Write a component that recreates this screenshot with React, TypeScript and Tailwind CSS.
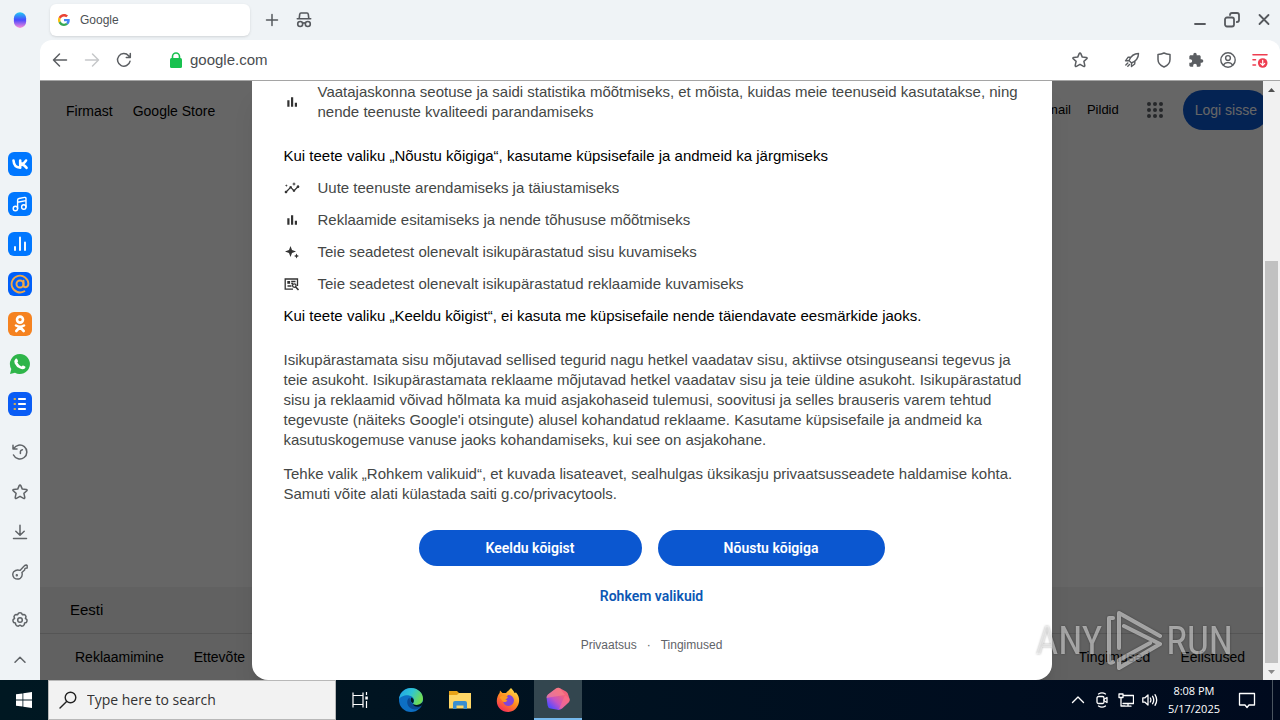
import type { ReactNode } from "react";
import { MdExtension, MdInsights } from "react-icons/md";

type IconProps = { className?: string };

function Line({ className, children, width = 1.5, box = 24 }: IconProps & { children: ReactNode; width?: number; box?: number }) {
  return (
    <svg
      viewBox={`0 0 ${box} ${box}`}
      className={className}
      fill="none"
      stroke="currentColor"
      strokeWidth={width}
      strokeLinecap="round"
      strokeLinejoin="round"
      aria-hidden="true"
    >
      {children}
    </svg>
  );
}

const StarIcon = ({ className }: IconProps) => (
  <Line className={className} box={16}>
    <path d="M8 .9 Q8.500 .9 8.800 1.600 L10.300 5.100 L14.300 5.500 Q15.600 5.800 14.800 6.800 L11.900 9.400 L12.800 13.400 Q12.900 14.900 11.600 14.400 L8 12.300 L4.400 14.400 Q3.100 14.900 3.200 13.400 L4.100 9.400 L1.200 6.800 Q.4 5.800 1.700 5.500 L5.700 5.100 L7.200 1.600 Q7.500 .9 8 .9Z" />
  </Line>
);

const GoogleIcon = () => (
  <svg viewBox="0 0 48 48" className="size-3 shrink-0" aria-hidden="true">
    <path fill="#EA4335" d="M24 9.500c3.500 0 6.700 1.200 9.200 3.600l6.900-6.900C35.900 2.400 30.500 0 24 0 14.600 0 6.500 5.400 2.600 13.200l8 6.200C12.400 13.700 17.700 9.500 24 9.500z" />
    <path fill="#4285F4" d="M47 24.500c0-1.600-.2-3.100-.4-4.500H24v9h12.900c-.6 3-2.300 5.500-4.800 7.200l7.700 6C44.400 38 47 31.800 47 24.500z" />
    <path fill="#FBBC05" d="M10.500 28.600c-.5-1.500-.8-3-.8-4.600s.3-3.100.8-4.600l-8-6.200C.9 16.500 0 20.100 0 24s.9 7.500 2.600 10.800z" />
    <path fill="#34A853" d="M24 48c6.500 0 11.900-2.100 15.900-5.800l-7.700-6c-2.200 1.500-4.900 2.300-8.200 2.300-6.300 0-11.600-4.200-13.500-9.900l-8 6.200C6.500 42.600 14.600 48 24 48z" />
  </svg>
);

const BarsIcon = () => (
  <svg viewBox="0 0 16 16" className="size-4" fill="currentColor" aria-hidden="true">
    <path d="M3.300 6.300 H5.500 V12.800 H3.300Z M7 3.300 H9.200 V12.800 H7Z M10.800 8.700 H13 V12.800 H10.800Z" />
  </svg>
);

const SparkIcon = () => (
  <svg viewBox="0 0 16 16" className="size-4" fill="currentColor" aria-hidden="true">
    <path d="M6.500 2 L8 6.100 L12 7.500 L8 9 L6.500 13 L5 9 L1 7.500 L5 6.100Z M12.500 9.500 L13.300 11.200 L15 12 L13.300 12.800 L12.500 14.500 L11.700 12.800 L10 12 L11.700 11.200Z" />
  </svg>
);

const AdIcon = () => (
  <svg viewBox="0 0 16 16" className="size-4" fill="none" stroke="currentColor" strokeWidth="1.300" aria-hidden="true">
    <path d="M9 13.200 H1.200 V3 H13.500 V10" />
    <rect x="3.300" y="5" width="2.800" height="2.800" fill="currentColor" stroke="none" />
    <path d="M7.200 5.500 H11.500 M7.200 7.500 H9 M3.500 10 H7.500" />
    <circle cx="10.300" cy="9.600" r="1.800" />
    <path d="M11.500 10.800 L14.500 14" strokeWidth="1.600" />
  </svg>
);

function Sidebar() {
  const apps: { label: string; tile: string; icon: ReactNode }[] = [
    {
      label: "VK",
      tile: "bg-[#0077ff]",
      icon: (
        <Line className="size-4" width={2.6} box={16}>
          <path d="M1.500 4.500 Q2 11.500 8.200 11.800 V4.500 M14 4.500 Q12.500 7.500 8.800 8.200 Q12.500 8.600 14.500 11.800" />
        </Line>
      ),
    },
    {
      label: "Music",
      tile: "bg-[#0077ff]",
      icon: (
        <Line className="size-4" width={1.4} box={16}>
          <circle cx="3.400" cy="12.500" r="2.200" />
          <circle cx="11.800" cy="11" r="2.200" />
          <path d="M5.600 12.500 V4 Q5.600 2.800 7 2.500 L12.600 1.400 Q14 1.200 14 2.600 V11 M5.600 6.200 L14 4.600" />
        </Line>
      ),
    },
    {
      label: "Stats",
      tile: "bg-[#0077ff]",
      icon: (
        <Line className="size-4" width={1.9} box={16}>
          <path d="M3 11 V14 M8 1.500 V14 M13 6.500 V14" />
        </Line>
      ),
    },
    {
      label: "Mail",
      tile: "bg-[#005ff9]",
      icon: (
        <Line className="size-5 text-[#f0a848]" width={1.9} box={20}>
          <circle cx="10" cy="10" r="3.500" />
          <path d="M13.500 6.800 V11 Q13.500 13.300 15.500 13.300 Q18.500 13 18.400 9.600 A8.400 8.400 0 1 0 14.300 17.300" />
        </Line>
      ),
    },
    {
      label: "OK",
      tile: "bg-[#f58220]",
      icon: (
        <Line className="size-5" width={2.6} box={20}>
          <circle cx="10" cy="5.600" r="3" />
          <path d="M6 11.500 Q10 13.900 14 11.500 M10 13 L6.300 17 M10 13 L13.700 17" />
        </Line>
      ),
    },
    {
      label: "WhatsApp",
      tile: "",
      icon: (
        <svg viewBox="0 0 24 24" className="size-6" aria-hidden="true">
          <path d="M12 2 A10 10 0 1 1 7 20.700 L2 22 L3.300 17 A10 10 0 0 1 12 2Z" fill="#2fb54a" />
          <path d="M7.600 6.700 Q8.700 6 9.300 7.200 L10 9 Q10.200 9.600 9.300 10.600 Q10.800 13.400 13.500 14.500 Q14.600 13.200 15.200 13.500 L17.200 14.500 Q18 15.200 16.800 16.500 Q15 18 12 16.600 Q8.300 14.900 6.700 11.400 Q5.700 8.400 7.600 6.700Z" fill="#fff" />
        </svg>
      ),
    },
    {
      label: "Lists",
      tile: "bg-[#0a5cf5]",
      icon: (
        <Line className="size-4" width={2.2} box={16}>
          <path d="M7 3 H13 M7 8 H13 M7 13 H13" />
          <path d="M2.600 3 H3 M2.600 8 H3 M2.600 13 H3" stroke="#d9b04a" />
        </Line>
      ),
    },
  ];

  const tools: { label: string; icon: ReactNode }[] = [
    {
      label: "History",
      icon: (
        <Line className="size-4" box={16}>
          <path d="M1.600 4.800 A7 7 0 1 1 1.500 11 M1 1.200 V5 H5 M8.400 9.400 V7.500 Q8.400 6.400 10.400 5.700" />
        </Line>
      ),
    },
    { label: "Bookmarks", icon: <StarIcon className="size-4" /> },
    {
      label: "Downloads",
      icon: (
        <Line className="size-4" box={16}>
          <path d="M8 1.200 V11 M3.800 7.200 L8 11.200 L12.200 7.200 M1.500 14.600 H14.500" />
        </Line>
      ),
    },
    {
      label: "Passwords",
      icon: (
        <Line className="size-4" width={1.4} box={16}>
          <path d="M8 6.400 L12.400 1.700 Q13 1 14.600 1 L15.200 1.500 V4 L13 4.400 L12.600 6 L9.900 8.500 Q11 12 8.300 14.300 Q5.200 16 2.200 14 Q-.4 11 1.700 7.700 Q4.500 5 8 6.400Z" />
          <circle cx="4.800" cy="11.300" r=".5" fill="currentColor" />
        </Line>
      ),
    },
  ];

  return (
    <aside className="flex w-10 shrink-0 flex-col items-center bg-[#eff3f6] text-[#606468]">
      <div className="flex h-10 items-center">
        <svg viewBox="0 0 16 18" className="h-4 w-3.5" aria-hidden="true">
          <defs>
            <linearGradient id="orb" x1="0" y1="0" x2="0" y2="1">
              <stop offset="0" stopColor="#20cdf2" />
              <stop offset=".5" stopColor="#4a48ff" />
              <stop offset="1" stopColor="#fb8bd8" />
            </linearGradient>
          </defs>
          <rect x="1" y="0" width="14" height="18" rx="7" fill="url(#orb)" />
        </svg>
      </div>
      <nav aria-label="Apps" className="mt-auto flex flex-col gap-4">
        {apps.map((app) => (
          <button key={app.label} type="button" aria-label={app.label} className={`flex size-6 items-center justify-center rounded-[6px] text-white ${app.tile}`}>
            {app.icon}
          </button>
        ))}
      </nav>
      <nav aria-label="Tools" className="mt-7 flex flex-col gap-6 pb-3">
        {tools.map((tool) => (
          <button key={tool.label} type="button" aria-label={tool.label} className="size-4">
            {tool.icon}
          </button>
        ))}
        <button type="button" aria-label="Settings" className="mt-2 size-4">
          <Line className="size-4" box={16}>
            <circle cx="8" cy="8" r="2.300" />
            <path d="M6.500 1.200 Q8 .4 9.500 1.200 L10.300 2.700 L12.100 2.500 Q13.700 3 14 4.700 L13.400 6.400 L14.900 7.600 Q15.300 9 14.300 10.500 L12.600 10.900 L12.300 12.700 Q11.300 14.200 9.700 14.200 L8 13.200 L6.300 14.200 Q4.700 14.200 3.700 12.700 L3.400 10.900 L1.700 10.500 Q.7 9 1.100 7.600 L2.600 6.400 L2 4.700 Q2.300 3 3.900 2.500 L5.700 2.700Z" />
          </Line>
        </button>
        <button type="button" aria-label="Collapse" className="size-4">
          <Line className="size-4" box={16}>
            <path d="M3 10.300 L8 5.300 L13 10.300" />
          </Line>
        </button>
      </nav>
    </aside>
  );
}

function TabBar() {
  return (
    <div className="flex h-10 items-center bg-[#eff3f6] pr-2 pl-2.5 text-[#56595e]">
      <div className="flex h-8 w-50 items-center gap-2.5 rounded-md bg-white px-2 text-xs text-[#4c5054] shadow-sm">
        <GoogleIcon />
        <span>Google</span>
      </div>
      <button type="button" aria-label="New tab" className="ml-3.5">
        <Line className="size-4" box={16}>
          <path d="M8 2.500 V13.500 M2.500 8 H13.500" />
        </Line>
      </button>
      <button type="button" aria-label="Private window" className="ml-4">
        <Line className="size-4" width={1.6} box={16}>
          <path d="M3.200 6.500 L3.700 2.300 Q3.900 1 5 1 H11 Q12.100 1 12.300 2.300 L12.800 6.500 M1.300 6.800 H14.700 M6.700 11.300 Q8 10.200 9.300 11.300" />
          <circle cx="4.200" cy="12" r="2.500" />
          <circle cx="11.800" cy="12" r="2.500" />
        </Line>
      </button>
      <div className="ml-auto flex items-center gap-4">
        <button type="button" aria-label="Minimize">
          <Line className="size-4" width={1.8} box={16}>
            <path d="M3 12 H13" />
          </Line>
        </button>
        <button type="button" aria-label="Restore">
          <Line className="size-4" width={1.8} box={16}>
            <rect x="1" y="5.500" width="9" height="9" rx="2" />
            <path d="M6 3 Q6 1 8 1 H13 Q15 1 15 3 V8 Q15 10 12.800 10" />
          </Line>
        </button>
        <button type="button" aria-label="Close">
          <Line className="size-4" width={1.8} box={16}>
            <path d="M3.500 3 L12.500 12 M12.500 3 L3.500 12" />
          </Line>
        </button>
      </div>
    </div>
  );
}

function Toolbar() {
  return (
    <div className="bg-[#eff3f6]">
      <div className="flex h-[41px] items-center gap-4 rounded-t-xl border-b border-[#a5a5a5] bg-white px-3 text-[#5b5e62]">
        <button type="button" aria-label="Back">
          <Line className="size-4" box={16}>
            <path d="M14.500 8 H1.500 M7.500 2 L1.500 8 L7.500 14" />
          </Line>
        </button>
        <button type="button" aria-label="Forward" className="text-[#c6c8ca]">
          <Line className="size-4" box={16}>
            <path d="M1.500 8 H14.500 M8.500 2 L14.500 8 L8.500 14" />
          </Line>
        </button>
        <button type="button" aria-label="Reload">
          <Line className="size-4" box={16}>
            <path d="M14 9.300 A6.300 6.300 0 1 1 12.600 3.700 L14 5.300 M14.300 1.500 V5.500 H10.300" />
          </Line>
        </button>
        <div className="ml-[22px] flex items-center gap-2">
          <svg viewBox="0 0 12 16" className="h-4 w-3" aria-hidden="true">
            <path d="M2.500 7 V4.500 A3.500 3.500 0 0 1 9.500 4.500 V7" fill="none" stroke="#18c14f" strokeWidth="1.600" />
            <rect x="0" y="6" width="12" height="10" rx="1.500" fill="#18c14f" />
          </svg>
          <span className="text-[15px] text-[#4a4d50]">google.com</span>
        </div>
        <button type="button" aria-label="Bookmark" className="mr-5 ml-auto">
          <StarIcon className="size-4" />
        </button>
        <button type="button" aria-label="Turbo">
          <Line className="size-4" width={1.4} box={16}>
            <path d="M14.500 1.500 Q8 1.500 5 8.500 L7.500 11 Q14.500 8 14.500 1.500Z M7 5 L4 5.300 L1.500 8.800 L5 8.600 M11 9 L10.700 12 L7.500 14.500 V11 M3.800 11 L1.800 13 M5.500 12.500 L3.800 14.200" />
          </Line>
        </button>
        <button type="button" aria-label="Protection">
          <Line className="size-4" box={16}>
            <path d="M8 1 Q10.500 2.300 14 2.500 V7.500 Q14 12.500 8 15 Q2 12.500 2 7.500 V2.500 Q5.500 2.300 8 1Z" />
          </Line>
        </button>
        <button type="button" aria-label="Extensions">
          <MdExtension className="size-4" />
        </button>
        <button type="button" aria-label="Profile">
          <Line className="size-4" width={1.4} box={16}>
            <circle cx="8" cy="8" r="7.200" />
            <circle cx="8" cy="6" r="2.400" />
            <path d="M3.300 13 Q5 10.500 8 10.500 Q11 10.500 12.700 13" />
          </Line>
        </button>
        <button type="button" aria-label="Menu" className="text-[#ee3d50]">
          <Line className="size-4" width={1.6} box={16}>
            <path d="M1 2.700 H15 M1 7.800 H3.500 M1 13 H3.500" />
            <circle cx="10.700" cy="11" r="4.800" fill="currentColor" stroke="none" />
            <path d="M10.700 8.300 V13.200 M8.700 11.300 L10.700 13.300 L12.700 11.300" stroke="#fff" strokeWidth="1.200" />
          </Line>
        </button>
      </div>
    </div>
  );
}

function GooglePage() {
  return (
    <div className="flex h-full flex-col overflow-hidden bg-white text-sm text-black">
      <header className="flex items-center justify-between pt-[9px] pl-[26px]">
        <nav className="flex gap-5 pt-px">
          <a href="#about">Firmast</a>
          <a href="#store">Google Store</a>
        </nav>
        <div className="-mr-1.5 flex items-center gap-4">
          <a href="#gmail" className="text-[13px]">Gmail</a>
          <a href="#images" className="text-[13px]">Pildid</a>
          <button type="button" aria-label="Apps" className="ml-2 flex size-6 items-center justify-center text-[#5f6368]">
            <svg viewBox="0 0 16 16" className="size-4" fill="currentColor" aria-hidden="true">
              {[2, 8, 14].map((y) => [2, 8, 14].map((x) => <circle key={`${x}-${y}`} cx={x} cy={y} r="2" />))}
            </svg>
          </button>
          <button type="button" className="h-10 rounded-full bg-[#0b57d0] px-3 whitespace-nowrap text-white">
            Logi sisse
          </button>
        </div>
      </header>
      <footer className="mt-auto bg-[#f2f2f2]">
        <div className="border-b border-[#d5d5d5] px-[30px] py-3 text-[15px]/[22px]">Eesti</div>
        <div className="flex h-[46px] items-center justify-between pr-[18px] pl-[35px]">
          <nav className="flex gap-[30px]">
            <a href="#ads">Reklaamimine</a>
            <a href="#business">Ettevõte</a>
          </nav>
          <nav className="flex gap-[30px]">
            <a href="#terms">Tingimused</a>
            <a href="#settings">Eelistused</a>
          </nav>
        </div>
      </footer>
    </div>
  );
}

function Purpose({ icon, children }: { icon: ReactNode; children: ReactNode }) {
  return (
    <li className="flex items-center gap-[18px]">
      <span className="size-4 shrink-0 text-[#333]">{icon}</span>
      <span>{children}</span>
    </li>
  );
}

function ConsentDialog() {
  return (
    <div
      role="dialog"
      aria-label="Küpsisefailid"
      className="flex h-full w-[800px] max-w-full flex-col overflow-hidden rounded-b-2xl bg-white px-8 pt-px text-[15px]/[20px] text-[#444746] shadow-xl"
    >
      <ul>
        <Purpose icon={<BarsIcon />}>
          Vaatajaskonna seotuse ja saidi statistika mõõtmiseks, et mõista, kuidas meie teenuseid kasutatakse, ning
          <br />
          nende teenuste kvaliteedi parandamiseks
        </Purpose>
      </ul>
      <p className="mt-6 text-black">Kui teete valiku „Nõustu kõigiga“, kasutame küpsisefaile ja andmeid ka järgmiseks</p>
      <ul className="my-3 flex flex-col gap-3">
        <Purpose icon={<MdInsights className="size-4" />}>Uute teenuste arendamiseks ja täiustamiseks</Purpose>
        <Purpose icon={<BarsIcon />}>Reklaamide esitamiseks ja nende tõhususe mõõtmiseks</Purpose>
        <Purpose icon={<SparkIcon />}>Teie seadetest olenevalt isikupärastatud sisu kuvamiseks</Purpose>
        <Purpose icon={<AdIcon />}>Teie seadetest olenevalt isikupärastatud reklaamide kuvamiseks</Purpose>
      </ul>
      <p className="text-black">Kui teete valiku „Keeldu kõigist“, ei kasuta me küpsisefaile nende täiendavate eesmärkide jaoks.</p>
      <p className="mt-6 whitespace-nowrap">
        Isikupärastamata sisu mõjutavad sellised tegurid nagu hetkel vaadatav sisu, aktiivse otsinguseansi tegevus ja
        <br />
        teie asukoht. Isikupärastamata reklaame mõjutavad hetkel vaadatav sisu ja teie üldine asukoht. Isikupärastatud
        <br />
        sisu ja reklaamid võivad hõlmata ka muid asjakohaseid tulemusi, soovitusi ja selles brauseris varem tehtud
        <br />
        tegevuste (näiteks Google'i otsingute) alusel kohandatud reklaame. Kasutame küpsisefaile ja andmeid ka
        <br />
        kasutuskogemuse vanuse jaoks kohandamiseks, kui see on asjakohane.
      </p>
      <p className="mt-3.5">
        Tehke valik „Rohkem valikuid“, et kuvada lisateavet, sealhulgas üksikasju privaatsusseadete haldamise kohta.
        <br />
        Samuti võite alati külastada saiti g.co/privacytools.
      </p>
      <div className="mt-[26px] flex justify-center gap-4 text-sm font-semibold text-white [font-family:Roboto,'Liberation_Sans',sans-serif]">
        <button type="button" className="h-9 w-[223px] rounded-full bg-[#0b57d0]">Keeldu kõigist</button>
        <button type="button" className="h-9 w-[227px] rounded-full bg-[#0b57d0]">Nõustu kõigiga</button>
      </div>
      <a href="#more" className="mt-5 self-center text-sm/[20px] font-semibold text-[#0b57b4] [font-family:Roboto,'Liberation_Sans',sans-serif]">
        Rohkem valikuid
      </a>
      <div className="mt-[30px] flex justify-center gap-2.5 text-[12px]/[18px] text-[#5f6368]">
        <a href="#privacy">Privaatsus</a>
        <span>·</span>
        <a href="#tos">Tingimused</a>
      </div>
    </div>
  );
}

function Scrollbar() {
  return (
    <div className="flex w-[17px] shrink-0 flex-col items-center bg-[#f1f1f1]" aria-hidden="true">
      <svg viewBox="0 0 17 17" className="size-[17px]"><path d="M5 11 L8.500 7 L12 11Z" fill="#505050" /></svg>
      <div className="grow-[163]" />
      <div className="w-[13px] grow-[402] bg-[#c1c1c1]" />
      <svg viewBox="0 0 17 17" className="size-[17px]"><path d="M5 7 L8.500 11 L12 7Z" fill="#8a8a8a" /></svg>
    </div>
  );
}

function Watermark() {
  return (
    <div className="pointer-events-none absolute right-[47px] bottom-2 flex items-center gap-1 text-[39px] leading-none text-white/50 drop-shadow-[0_0_1px_rgba(0,0,0,0.6)] [font-family:'Roboto_Condensed','Open_Sans_Condensed','Liberation_Sans_Narrow','Liberation_Sans',sans-serif]">
      <span>ANY</span>
      <svg viewBox="0 0 56 62" className="h-[62px] w-14" fill="none" stroke="currentColor" strokeWidth="4" strokeLinejoin="round" strokeLinecap="round" aria-hidden="true">
        <path d="M7 8 H3 V50 Q3 54 7 52 M13 38 V3 L54 26 M18 16 L54 34 L13 58 V50 L44 33" />
      </svg>
      <span>RUN</span>
    </div>
  );
}

function Taskbar() {
  return (
    <footer className="flex h-10 shrink-0 items-stretch bg-linear-to-r from-[#001822] to-[#000a1e] text-white [font-family:'Open_Sans','Noto_Sans',sans-serif]">
      <button type="button" aria-label="Start" className="flex w-12 items-center justify-center">
        <svg viewBox="0 0 16 16" className="size-4" fill="#fff" aria-hidden="true">
          <path d="M0 2.300 L6.500 1.400 V7.600 H0Z M7.300 1.300 L16 0 V7.600 H7.300Z M0 8.400 H6.500 V14.600 L0 13.700Z M7.300 8.400 H16 V16 L7.300 14.700Z" />
        </svg>
      </button>
      <label className="flex w-72 items-center gap-2.5 border border-[#b8b8b8] bg-[#f2f2f2] px-2.5 text-[#222]">
        <Line className="size-[18px] shrink-0" width={1.4} box={18}>
          <circle cx="11.500" cy="6.500" r="5.300" />
          <path d="M7.600 10.400 L1 17" />
        </Line>
        <input type="text" aria-label="Search" placeholder="Type here to search" className="min-w-0 flex-1 bg-transparent text-sm outline-none placeholder:text-[#333]" />
      </label>
      <button type="button" aria-label="Task view" className="flex w-12 items-center justify-center">
        <svg viewBox="0 0 16 16" className="size-4" fill="none" stroke="#fff" strokeWidth="1.200" aria-hidden="true">
          <path d="M1 .5 V3.500 H11 V.5 M1 15.500 V12.500 H11 V15.500 M1 3.500 V12.500 M11 3.500 V12.500 M14.500 0 V3 M14.500 9 V16" />
          <rect x="13.300" y="4.500" width="2.500" height="3" fill="#fff" stroke="none" />
        </svg>
      </button>
      <button type="button" aria-label="Edge" className="flex w-[54px] items-center justify-center">
        <svg viewBox="0 0 24 24" className="size-6" aria-hidden="true">
          <defs>
            <linearGradient id="edgeTop" x1="0" y1="0" x2="1" y2=".4">
              <stop offset="0" stopColor="#1f9fe8" />
              <stop offset=".55" stopColor="#2fc5d4" />
              <stop offset="1" stopColor="#6fdc55" />
            </linearGradient>
          </defs>
          <circle cx="12" cy="12" r="12" fill="#0d6fc4" />
          <path d="M0 11.500 C.5 4.500 6 0 12 0 C19 0 24 5 24 10.700 C24 15 20.500 17 17.500 17 C15 17 13.500 16 14.200 14.900 C16 12.800 15 8 10 7.400 C5 7 1 9 0 11.500Z" fill="url(#edgeTop)" />
          <path d="M10.500 9.500 C6.500 12 7.500 20.500 15.500 21.500 C19 21.500 21.500 20 23 17.300 C19.500 19.500 11.500 18.500 10.500 9.500Z" fill="#0b4a94" />
          <path d="M13.900 15.300 C12 14.500 11 12 12.300 9.600 C15 10.500 15.500 13.300 13.900 15.300Z M14 15.500 C14.500 17.500 21 18 24 13.500 L23.500 17 C20 20 14 19 14 15.500Z" fill="#001822" />
        </svg>
      </button>
      <button type="button" aria-label="File Explorer" className="flex w-11 items-center justify-center">
        <svg viewBox="0 0 22 18" className="h-[18px] w-[22px]" aria-hidden="true">
          <path d="M0 0 H8 L10 2 H22 V17 H0Z" fill="#e8a317" />
          <path d="M0 4 H8 L10 2 H22 V17.500 H0Z" fill="#ffd766" />
          <path d="M4 18 V12 Q4 10 6 10 H16 Q18 10 18 12 V18 H14.500 V14.500 H7.500 V18Z" fill="#3a8fd0" />
        </svg>
      </button>
      <button type="button" aria-label="Firefox" className="flex w-[52px] items-center justify-center">
        <svg viewBox="0 0 24 24" className="size-6" aria-hidden="true">
          <defs>
            <linearGradient id="fox" x1=".8" y1="0" x2=".2" y2="1">
              <stop offset="0" stopColor="#ffe14a" />
              <stop offset=".5" stopColor="#ff8a1f" />
              <stop offset="1" stopColor="#f5245e" />
            </linearGradient>
          </defs>
          <path d="M15 0 C17 2 18 3.500 18.500 5 L20 4.500 C22.500 7 23.500 10 23 14 C22 20 17.500 24 12 24 C6 24 1 19.500 .8 13.500 C.7 10 2 7 3.600 5 L4 2.500 L6.500 5 L10 5 C11.500 3 13.500 2 15 0Z" fill="url(#fox)" />
          <path d="M12 7 A5.500 5.500 0 1 1 7 13 C8.500 14 10 13.500 11.500 12 C9 12 8 10.500 8.500 9.500 C9.500 9.500 11 9 12 7Z" fill="#8245d8" />
          <path d="M3.600 9.500 C5 7.500 8 7.500 9.500 8.500 L12 9 C11.500 10.500 9.500 11 9.300 12 L11.500 12.800 C9 15 7 14 6.500 13Z" fill="#ff9b22" />
        </svg>
      </button>
      <button type="button" aria-label="Browser" className="flex w-12 items-center justify-center border-b-2 border-[#76b9ed] bg-[#33464f]">
        <svg viewBox="0 0 24 24" className="size-6" aria-hidden="true">
          <defs>
            <linearGradient id="gem" x1="1" y1="0" x2="0" y2="1">
              <stop offset=".3" stopColor="#f2627c" />
              <stop offset=".6" stopColor="#c452c4" />
              <stop offset=".85" stopColor="#5a4bff" />
            </linearGradient>
          </defs>
          <path d="M10 1.500 Q12 .3 14 1.300 L20 4.500 Q22 5.500 22.300 8 L23.600 12 Q24 14 22.500 15.500 L16 21.500 Q14 23.500 11.500 22.800 L4.500 21.500 Q2 21 1.600 18.500 L.6 11 Q.3 9 2 7.500Z" fill="url(#gem)" />
          <path d="M10 1.500 Q12 .3 14 1.300 L19 8 L6 10 L.6 11 Q.3 9 2 7.500Z" fill="#f5808a" fillOpacity=".7" />
          <path d="M19 8 L23.600 12 Q24 14 22.500 15.500 L16 21.500 L13 22Z" fill="#ff7088" fillOpacity=".6" />
        </svg>
      </button>
      <div className="ml-auto flex items-center gap-2">
        <button type="button" aria-label="Hidden icons">
          <Line className="size-4" width={1.4} box={16}><path d="M2.500 10.500 L8 5 L13.500 10.500" /></Line>
        </button>
        <Line className="size-4" width={1.3} box={16}>
          <rect x="3" y="4.500" width="7" height="7" rx="1.500" />
          <path d="M10 7.200 L13 5.500 V10.500 L10 8.800 M4.500 2 Q8 -.3 11.500 2 M4.500 14 Q8 16.300 11.500 14" />
        </Line>
        <Line className="size-4" width={1.3} box={16}>
          <path d="M5 3.500 H15.500 V11.500 H5 M1 2 H5 V5.500 H1Z M3 5.500 V14 H7 M10 11.500 V14 M7 14.200 H13" />
        </Line>
        <Line className="size-4" width={1.3} box={16}>
          <path d="M.8 5.800 H3 L6 3 V13 L3 10.200 H.8Z M8.300 6 Q9.500 8 8.300 10 M10.600 4.300 Q12.900 8 10.600 11.700 M13 2.700 Q16.400 8 13 13.300" />
        </Line>
        <div className="mx-0.5 text-center text-[11px]/[18px] whitespace-nowrap">
          <div>8:08 PM</div>
          <div>5/17/2025</div>
        </div>
        <button type="button" aria-label="Notifications" className="mx-2">
          <Line className="size-[18px]" width={1.3} box={18}>
            <path d="M1.500 2.500 H16.500 V14 H11 L9 16.500 L7 14 H1.500Z" />
          </Line>
        </button>
        <div className="h-10 w-2 border-l border-[#4a5560]" />
      </div>
    </footer>
  );
}

export default function App() {
  return (
    <div className="flex h-screen flex-col [font-family:'Liberation_Sans',Arial,sans-serif]">
      <div className="flex min-h-0 flex-1">
        <Sidebar />
        <div className="relative flex min-w-0 flex-1 flex-col">
          <TabBar />
          <Toolbar />
          <div className="flex min-h-0 flex-1">
            <main className="relative min-w-0 flex-1 overflow-hidden">
              <GooglePage />
              <div className="absolute inset-0 flex justify-center bg-black/60">
                <ConsentDialog />
              </div>
            </main>
            <Scrollbar />
          </div>
          <Watermark />
        </div>
      </div>
      <Taskbar />
    </div>
  );
}
